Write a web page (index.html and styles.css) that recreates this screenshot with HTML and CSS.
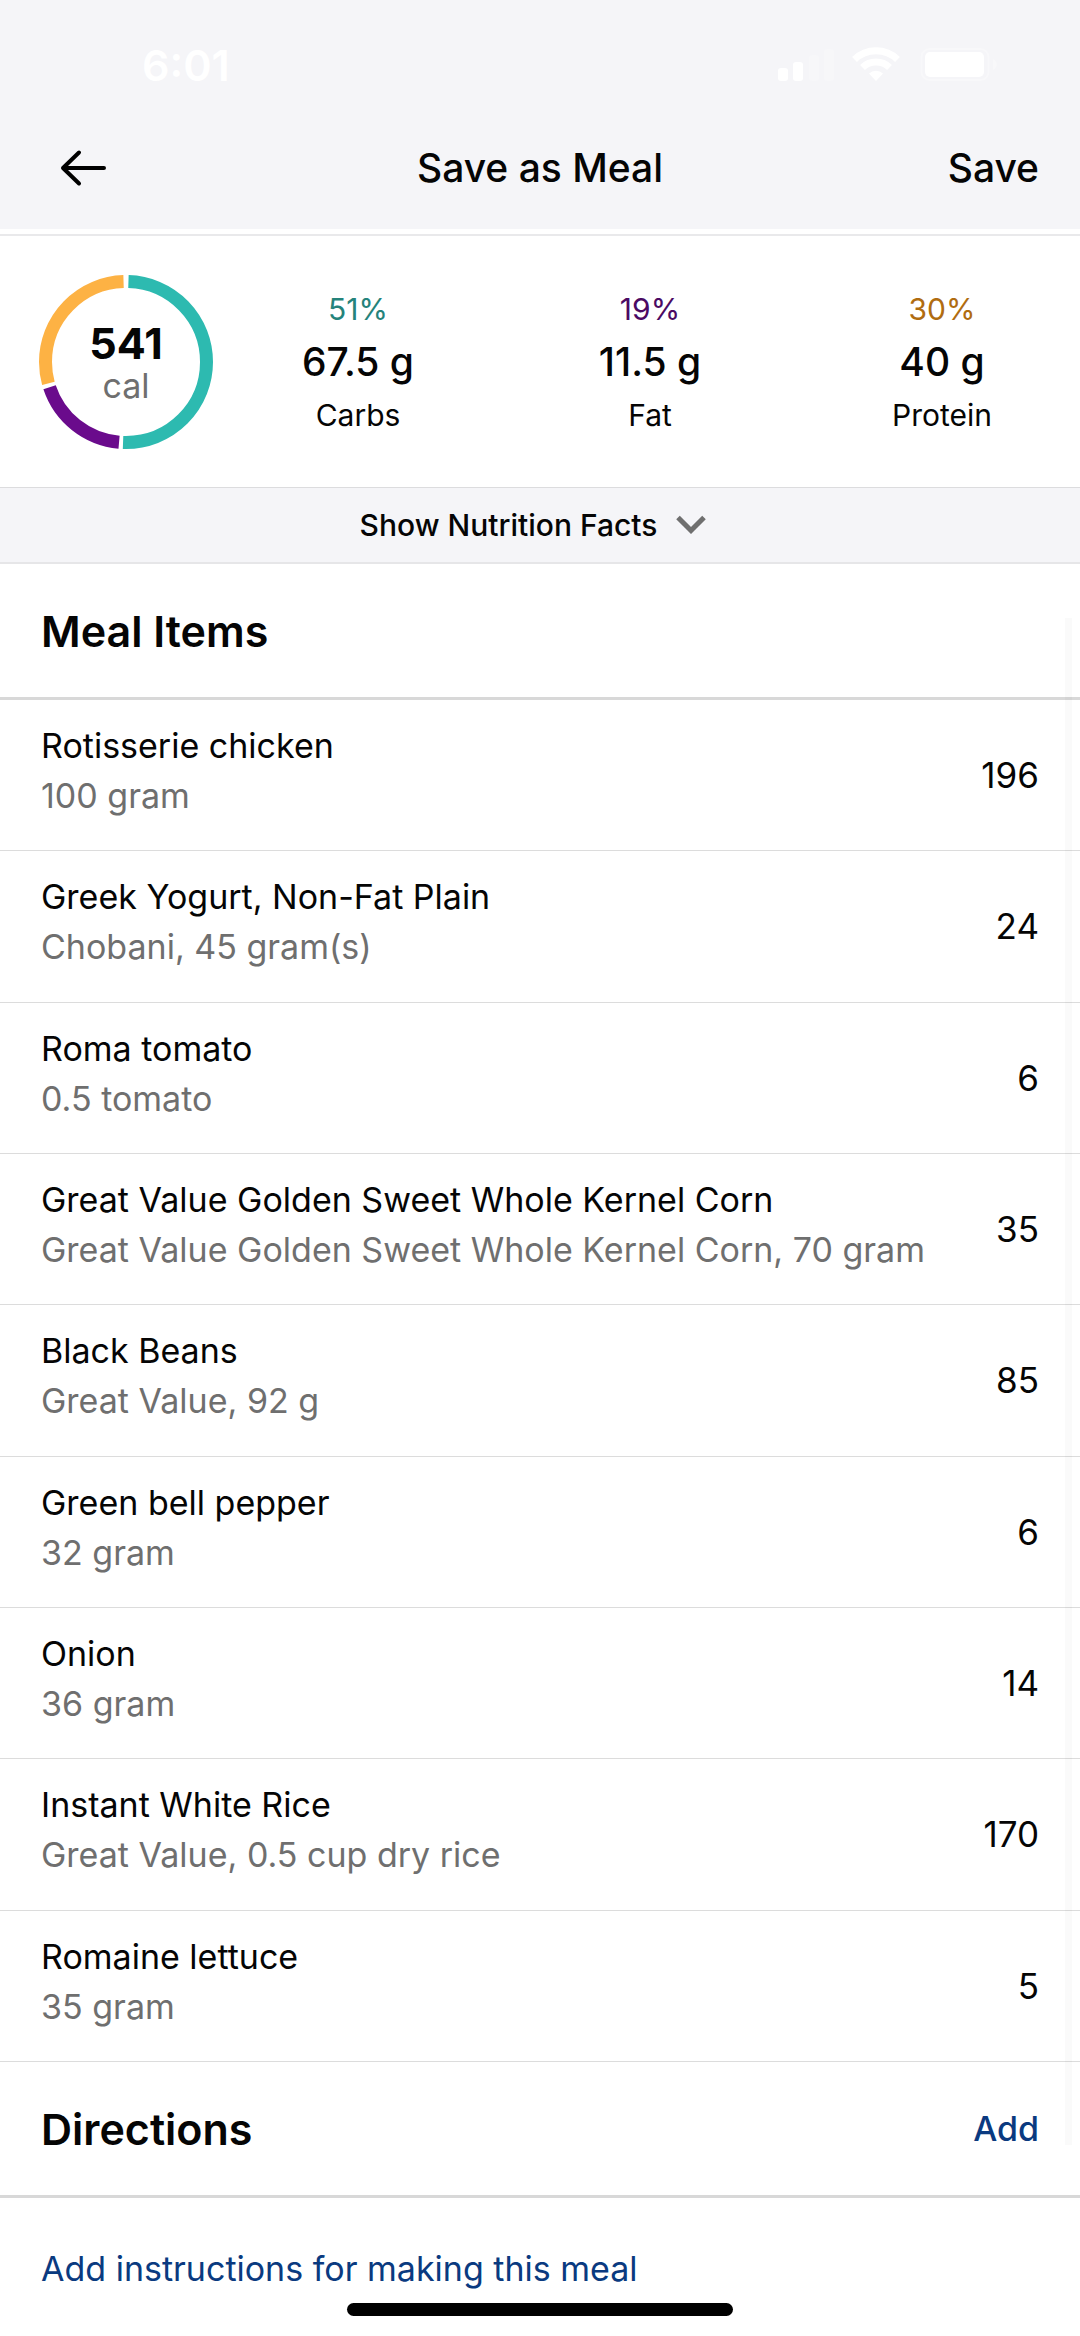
FILE: index.html
```html
<!DOCTYPE html>
<html lang="en">
<head>
    <meta charset="UTF-8">
    <meta name="viewport" content="width=device-width, initial-scale=1.0">
    <title>Save as Meal</title>
    <link rel="stylesheet" href="styles.css">
</head>
<body>
    <div class="app">
        <header class="header">
            <div class="statusBar">
                <span class="time">6:01</span>
                <svg class="statusIcons" width="220" height="36" viewBox="0 0 220 36" fill="#fff">
                    <rect x="0" y="21" width="10" height="13" rx="3"/>
                    <rect x="15" y="15" width="10" height="19" rx="3"/>
                    <g opacity="0.2">
                        <rect x="31" y="8" width="10" height="26" rx="3"/>
                        <rect x="46" y="2" width="10" height="32" rx="3"/>
                    </g>
                    <g fill="none" stroke="#fff" stroke-width="7">
                        <path d="M76.500 12.500a31 31 0 0 1 43 0"/>
                        <path d="M84.500 20.500a19.500 19.500 0 0 1 27 0"/>
                    </g>
                    <path d="M98 34l-7-7.500a10 10 0 0 1 14 0z"/>
                    <rect x="143.500" y="2" width="67" height="31" rx="8" fill="none" stroke="#fff" stroke-width="2" opacity="0.3"/>
                    <rect x="147" y="5" width="59" height="25" rx="5"/>
                    <path d="M215 12c5 2 5 9 0 11z" opacity="0.3"/>
                </svg>
            </div>
            <div class="navBar">
                <button class="backButton" aria-label="Back">
                    <svg width="48" height="40" viewBox="0 0 48 40" fill="none" stroke="#000" stroke-width="4" stroke-linecap="round" stroke-linejoin="round">
                        <path d="M45 20H4M20 4.500L4 20l16 15.500"/>
                    </svg>
                </button>
                <h1 class="title">Save as Meal</h1>
                <button class="saveButton">Save</button>
            </div>
        </header>

        <section class="summary">
            <div class="ring">
                <svg class="ringChart" viewBox="0 0 174 174" fill="none" stroke-width="13">
                    <g transform="rotate(-90 87 87)">
                        <circle cx="87" cy="87" r="80.500" pathLength="100" stroke="#2dbab0" stroke-dasharray="50.100 49.900" stroke-dashoffset="-0.500"/>
                        <circle cx="87" cy="87" r="80.500" pathLength="100" stroke="#6a0b8c" stroke-dasharray="18.500 81.500" stroke-dashoffset="-51.400"/>
                        <circle cx="87" cy="87" r="80.500" pathLength="100" stroke="#fdb244" stroke-dasharray="28.800 71.200" stroke-dashoffset="-70.700"/>
                    </g>
                </svg>
                <span class="calories">541</span>
                <span class="unit">cal</span>
            </div>
            <div class="macros">
                <div class="macro">
                    <span class="percent carbs">51%</span>
                    <span class="grams">67.5 g</span>
                    <span class="name">Carbs</span>
                </div>
                <div class="macro">
                    <span class="percent fat">19%</span>
                    <span class="grams">11.5 g</span>
                    <span class="name">Fat</span>
                </div>
                <div class="macro">
                    <span class="percent protein">30%</span>
                    <span class="grams">40 g</span>
                    <span class="name">Protein</span>
                </div>
            </div>
        </section>

        <button class="factsButton">
            Show Nutrition Facts
            <svg width="30" height="20" viewBox="0 0 30 20" fill="none" stroke="#6f6f6f" stroke-width="5">
                <path d="M2 2.500l13 13 13-13"/>
            </svg>
        </button>

        <main class="content">
            <div class="sectionHeader">
                <h2>Meal Items</h2>
            </div>
            <ul class="items">
                <li class="item">
                    <div class="food">
                        <div>Rotisserie chicken</div>
                        <div class="serving">100 gram</div>
                    </div>
                    <span class="count">196</span>
                </li>
                <li class="item">
                    <div class="food">
                        <div>Greek Yogurt, Non-Fat Plain</div>
                        <div class="serving">Chobani, 45 gram(s)</div>
                    </div>
                    <span class="count">24</span>
                </li>
                <li class="item">
                    <div class="food">
                        <div>Roma tomato</div>
                        <div class="serving">0.5 tomato</div>
                    </div>
                    <span class="count">6</span>
                </li>
                <li class="item">
                    <div class="food">
                        <div>Great Value Golden Sweet Whole Kernel Corn</div>
                        <div class="serving">Great Value Golden Sweet Whole Kernel Corn, 70 gram</div>
                    </div>
                    <span class="count">35</span>
                </li>
                <li class="item">
                    <div class="food">
                        <div>Black Beans</div>
                        <div class="serving">Great Value, 92 g</div>
                    </div>
                    <span class="count">85</span>
                </li>
                <li class="item">
                    <div class="food">
                        <div>Green bell pepper</div>
                        <div class="serving">32 gram</div>
                    </div>
                    <span class="count">6</span>
                </li>
                <li class="item">
                    <div class="food">
                        <div>Onion</div>
                        <div class="serving">36 gram</div>
                    </div>
                    <span class="count">14</span>
                </li>
                <li class="item">
                    <div class="food">
                        <div>Instant White Rice</div>
                        <div class="serving">Great Value, 0.5 cup dry rice</div>
                    </div>
                    <span class="count">170</span>
                </li>
                <li class="item">
                    <div class="food">
                        <div>Romaine lettuce</div>
                        <div class="serving">35 gram</div>
                    </div>
                    <span class="count">5</span>
                </li>
            </ul>
            <div class="sectionHeader">
                <h2>Directions</h2>
                <button class="addButton">Add</button>
            </div>
            <div class="instructions">
                <a href="#">Add instructions for making this meal</a>
            </div>
            <div class="scrollbar"></div>
            <div class="homeIndicator"></div>
        </main>
    </div>
</body>
</html>
```
FILE: styles.css
```css
* {
    box-sizing: border-box;
}
body {
    margin: 0;
    background-color: #fff;
    color: #050505;
    font-family: Inter, "Liberation Sans", sans-serif;
    font-size: 34px;
    line-height: 50px;
}
button {
    padding: 0;
    border: 0;
    background: none;
    color: inherit;
    font: inherit;
    cursor: pointer;
}
svg {
    display: block;
}
h1, h2 {
    margin: 0;
}
.app {
    display: flex;
    flex-direction: column;
    min-height: 100vh;
}

/* header */
.header {
    background-color: #f5f5f8;
    padding-bottom: 23px;
}
.statusBar {
    display: flex;
    justify-content: space-between;
    align-items: center;
    height: 130px;
    padding: 0 82px 0 142px;
    color: #fff;
}
.time {
    font-size: 43px;
    font-weight: 600;
}
.navBar {
    display: grid;
    grid-template-columns: 1fr auto 1fr;
    align-items: center;
    height: 76px;
    padding: 0 41px;
    font-size: 39px;
    font-weight: 500;
}
.backButton {
    justify-self: start;
    margin-left: 18px;
}
.title {
    font-size: 39px;
    font-weight: 500;
}
.saveButton {
    justify-self: end;
}

/* calories and macros */
.summary {
    display: flex;
    align-items: center;
    gap: 27px;
    height: 253px;
    margin-top: 5px;
    padding: 0 20px 0 39px;
    border-top: 2px solid #e9e9eb;
}
.ring {
    position: relative;
    display: flex;
    flex-direction: column;
    align-items: center;
    justify-content: center;
    width: 174px;
    height: 174px;
    padding-top: 4px;
}
.ringChart {
    position: absolute;
    inset: 0;
}
.calories {
    font-size: 43px;
    font-weight: 700;
    line-height: 44px;
}
.unit {
    color: #6f6f6f;
    line-height: 42px;
}
.macros {
    flex: 1;
    display: grid;
    grid-template-columns: repeat(3, 1fr);
    gap: 56px;
}
.macro {
    display: flex;
    flex-direction: column;
    align-items: center;
    font-size: 30px;
}
.grams {
    font-size: 39px;
    font-weight: 500;
    line-height: 56px;
}
.carbs {
    color: #25837b;
}
.fat {
    color: #4b0a63;
}
.protein {
    color: #b06c10;
}
.factsButton {
    display: flex;
    align-items: center;
    justify-content: center;
    gap: 19px;
    height: 77px;
    background-color: #f5f5f8;
    border-top: 1px solid #dcdcde;
    border-bottom: 2px solid #e6e6e8;
    padding-right: 14px;
    font-size: 30px;
    font-weight: 500;
}

/* meal items */
.content {
    position: relative;
    flex: 1;
    display: flex;
    flex-direction: column;
}
.sectionHeader {
    display: flex;
    align-items: center;
    justify-content: space-between;
    height: 136px;
    padding: 0 41px;
    border-bottom: 3px solid #d8d8d8;
}
.sectionHeader h2 {
    font-size: 43px;
    font-weight: 600;
}
.items {
    flex: 1;
    display: grid;
    grid-auto-rows: 1fr;
    margin: 0;
    padding: 0;
    list-style: none;
}
.item {
    display: flex;
    align-items: center;
    justify-content: space-between;
    padding: 0 41px;
    border-bottom: 1px solid #dcdcdc;
}
.food {
    padding-bottom: 8px;
}
.serving {
    color: #6f6f6f;
}
.count {
    font-size: 35px;
}
.addButton {
    color: #0a3a80;
    font-weight: 500;
}
.instructions {
    height: 138px;
    padding: 46px 41px 0;
}
.instructions a {
    color: #0a3a80;
    text-decoration: none;
}
.scrollbar {
    position: absolute;
    top: 54px;
    right: 8px;
    bottom: 191px;
    width: 7px;
    background-color: rgba(0, 0, 0, 0.02);
}
.homeIndicator {
    position: absolute;
    bottom: 20px;
    left: 50%;
    width: 386px;
    height: 13px;
    margin-left: -193px;
    border-radius: 7px;
    background-color: #000;
}
```
